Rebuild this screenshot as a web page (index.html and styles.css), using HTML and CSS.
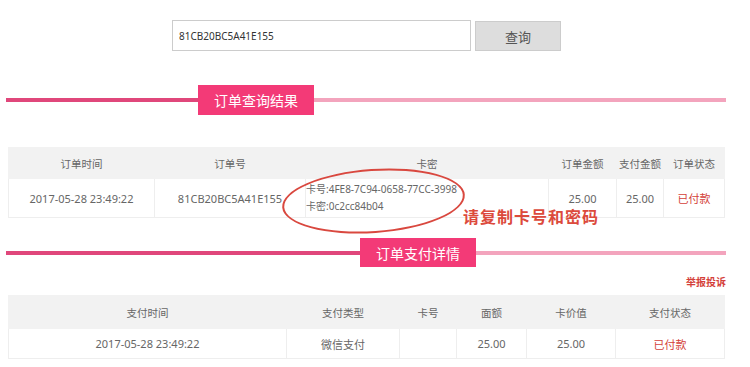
FILE: index.html
```html
<!DOCTYPE html>
<html lang="zh-CN">
<head>
    <meta charset="UTF-8">
    <title>订单查询</title>
    <link rel="stylesheet" href="styles.css">
</head>
<body>
    <div class="page">
        <form class="search">
            <input class="search-input" type="text" value="81CB20BC5A41E155">
            <button class="search-btn" type="button">查询</button>
        </form>

        <div class="section-title first">
            <span class="line-left"></span>
            <span class="title-box">订单查询结果</span>
            <span class="line-right"></span>
        </div>

        <div class="result-wrap">
            <table class="grid order-table">
                <thead>
                    <tr>
                        <th class="c1">订单时间</th>
                        <th class="c2">订单号</th>
                        <th class="c3">卡密</th>
                        <th class="c4">订单金额</th>
                        <th class="c5">支付金额</th>
                        <th class="c6">订单状态</th>
                    </tr>
                </thead>
                <tbody>
                    <tr>
                        <td>2017-05-28 23:49:22</td>
                        <td>81CB20BC5A41E155</td>
                        <td class="card">
                            <div>卡号:4FE8-7C94-0658-77CC-3998</div>
                            <div>卡密:0c2cc84b04</div>
                        </td>
                        <td>25.00</td>
                        <td>25.00</td>
                        <td class="paid">已付款</td>
                    </tr>
                </tbody>
            </table>
            <span class="circle"></span>
            <span class="note">请复制卡号和密码</span>
        </div>

        <div class="section-title second">
            <span class="line-left"></span>
            <span class="title-box">订单支付详情</span>
            <span class="line-right"></span>
        </div>

        <div class="report"><a href="#">举报投诉</a></div>

        <table class="grid pay-table">
            <thead>
                <tr>
                    <th class="p1">支付时间</th>
                    <th class="p2">支付类型</th>
                    <th class="p3">卡号</th>
                    <th class="p4">面额</th>
                    <th class="p5">卡价值</th>
                    <th class="p6">支付状态</th>
                </tr>
            </thead>
            <tbody>
                <tr>
                    <td>2017-05-28 23:49:22</td>
                    <td>微信支付</td>
                    <td></td>
                    <td>25.00</td>
                    <td>25.00</td>
                    <td class="paid">已付款</td>
                </tr>
            </tbody>
        </table>
    </div>
</body>
</html>
```

FILE: styles.css
```css
body {
    margin: 0;
    font-family: "Noto Sans", "Noto Sans CJK SC", sans-serif;
    font-size: 11px;
    color: #666;
    background: #fff;
}
.page {
    width: 720px;
    padding: 20px 0 0 6px;
}
.search {
    display: flex;
    gap: 4px;
    margin: 0 0 0 166px;
}
.search-input {
    width: 299px;
    height: 31px;
    box-sizing: border-box;
    border: 1px solid #ccc;
    padding: 0 6px;
    font-family: inherit;
    font-size: 10px;
    color: #333;
}
.search-btn {
    width: 86px;
    height: 30px;
    margin-top: 1px;
    border: 1px solid #ccc;
    background: #ddd;
    font-family: "Noto Sans CJK SC", sans-serif;
    font-size: 13px;
    color: #555;
}
.section-title {
    display: flex;
    align-items: center;
    height: 30px;
}
.section-title.first {
    margin-top: 34px;
}
.section-title.second {
    margin-top: 20px;
    height: 29px;
}
.line-left {
    height: 4px;
    background: #e0477b;
}
.first .line-left {
    width: 192px;
}
.second .line-left {
    width: 354px;
}
.line-right {
    flex: 1;
    height: 4px;
    background: #f3a4bd;
}
.title-box {
    height: 100%;
    padding: 0 16px;
    display: flex;
    align-items: center;
    background: #f33a77;
    color: #fff;
    font-size: 14px;
    font-family: "Noto Sans CJK SC", sans-serif;
}
.grid {
    border-collapse: collapse;
    table-layout: fixed;
    width: 717px;
    margin-left: 2px;
    text-align: center;
    white-space: nowrap;
}
.grid th {
    background: #f2f2f2;
    font-weight: normal;
    height: 30px;
    padding: 0;
    border: 1px solid #f2f2f2;
    font-size: 10.5px;
}
.grid td {
    border: 1px solid #eee;
    padding: 0;
}
.result-wrap {
    position: relative;
    margin-top: 32px;
}
.order-table td {
    height: 38px;
}
.c1 { width: 145px; }
.c2 { width: 150px; }
.c3 { width: 242px; }
.c4 { width: 67px; }
.c5 { width: 46px; }
.card {
    text-align: left;
    padding-left: 0 !important;
    line-height: 17px;
    font-size: 10px;
}
.paid {
    color: #d43f3a;
}
.circle {
    position: absolute;
    left: 276px;
    top: 22px;
    width: 179px;
    height: 60px;
    border: 2px solid #d9483f;
    border-radius: 50%;
    transform: rotate(-4deg);
}
.note {
    position: absolute;
    left: 457px;
    top: 59px;
    font-size: 16px;
    font-weight: bold;
    color: #dc4a3c;
    font-family: "Noto Sans CJK SC", sans-serif;
    letter-spacing: 1px;
    line-height: 20px;
}
.report {
    text-align: right;
    margin: 8px 0 6px;
    font-size: 10px;
    line-height: 14px;
    font-weight: bold;
    font-family: "Noto Sans CJK SC", sans-serif;
}
.report a {
    color: #d43f3a;
    text-decoration: none;
}
.pay-table th {
    height: 32px;
}
.pay-table td {
    height: 29px;
}
.p1 { width: 277px; }
.p2 { width: 112px; }
.p3 { width: 56px; }
.p4 { width: 69px; }
.p5 { width: 88px; }
```
